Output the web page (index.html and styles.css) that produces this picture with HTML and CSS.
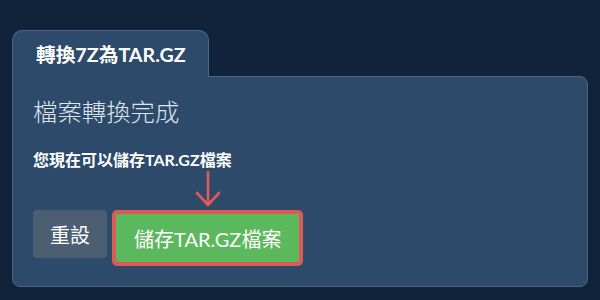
FILE: index.html
```html
<!DOCTYPE html>
<html lang="zh-Hant">
<head>
<meta charset="utf-8">
<link rel="stylesheet" href="styles.css">
</head>
<body>
<div class="wrap">
  <div class="tab">轉換7Z為TAR.GZ</div>
  <div class="panel">
    <h2 class="heading">檔案轉換完成</h2>
    <p class="note">您現在可以儲存TAR.GZ檔案</p>
    <div class="actions">
      <button class="btn btn-reset">重設</button>
      <div class="save-wrap">
        <svg class="arrow" width="30" height="36" viewBox="0 0 30 36">
          <path d="M15 1 V34 M4 22 L15 34 L26 22" fill="none" stroke="#dc5b55" stroke-width="2.6" stroke-linecap="round" stroke-linejoin="round"/>
        </svg>
        <button class="btn btn-save">儲存TAR.GZ檔案</button>
      </div>
    </div>
  </div>
</div>
</body>
</html>
```
FILE: styles.css
```css
html, body {
  margin: 0;
  padding: 0;
  background: #11233a;
  font-family: Lato, "Noto Sans CJK TC", sans-serif;
}
.wrap {
  padding: 30px 12px 0 12px;
}
.tab {
  position: relative;
  z-index: 2;
  display: inline-flex;
  align-items: center;
  box-sizing: border-box;
  height: 47px;
  padding: 0 22px 1px 23px;
  margin-bottom: -1px;
  background: #2d4a6a;
  border: 1px solid #4b6686;
  border-bottom: none;
  border-radius: 10px 10px 0 0;
  color: #ffffff;
  font-weight: 700;
  font-size: 19.7px;
}
.panel {
  position: relative;
  z-index: 1;
  background: #2d4a6a;
  border: 1px solid #4b6686;
  border-radius: 0 8px 8px 8px;
  padding: 20px 20px 20px 20px;
}
.heading {
  margin: 0;
  font-size: 24.4px;
  line-height: 29px;
  font-weight: 300;
  color: #dfe5ec;
}
.note {
  margin: 23px 0 0 0;
  font-size: 16px;
  line-height: 22px;
  font-weight: 700;
  color: #ffffff;
}
.actions {
  display: flex;
  align-items: flex-start;
  gap: 5px;
  margin-top: 39px;
}
.btn {
  font-family: inherit;
  font-size: 20px;
  height: 48px;
  padding: 0 17px;
  border: none;
  border-radius: 4px;
  color: #ffffff;
  box-sizing: border-box;
}
.btn-reset {
  background: #4c5e71;
}
.save-wrap {
  position: relative;
}
.btn-save {
  background: #5cb85c;
  border: 4px solid #dc5b55;
  height: 56px;
  padding: 0 18px;
  border-radius: 5px;
}
.arrow {
  position: absolute;
  left: 50%;
  top: -39px;
  margin-left: -15px;
}
```
